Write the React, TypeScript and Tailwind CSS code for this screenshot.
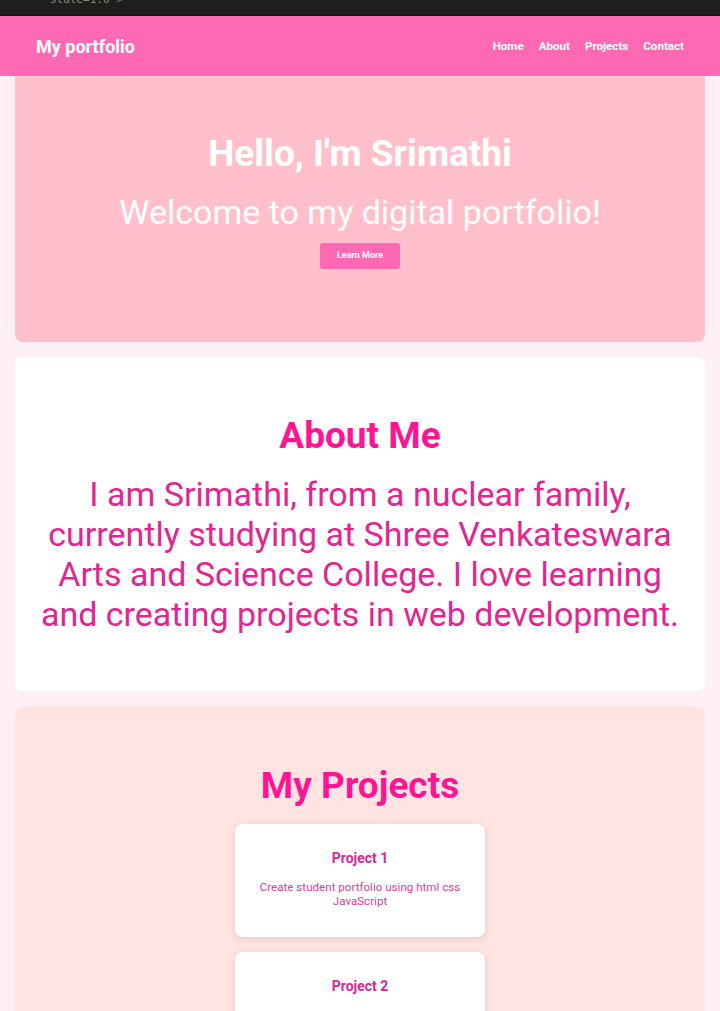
import React from 'react';

const navLinks = ['Home', 'About', 'Projects', 'Contact'];

const projects = [
  { title: 'Project 1', text: 'Create student portfolio using html css JavaScript' },
  { title: 'Project 2', text: 'Responsive landing page' },
];

function ProjectCard({ title, text }: { title: string; text: string }) {
  return (
    <div className="w-[250px] rounded-lg bg-white px-5 pt-[26px] pb-[29px] text-center shadow-[0_2px_8px_rgba(0,0,0,0.12)]">
      <h3 className="text-[14px] font-bold leading-[1.2] text-[#d8288c]">{title}</h3>
      <p className="mt-[13px] text-[11.6px] leading-[14px] text-[#e0409a]">{text}</p>
    </div>
  );
}

export default function App() {
  return (
    <div className="min-h-screen overflow-hidden bg-[#fff0f5] font-['Roboto',sans-serif]">
      <div className="relative h-4 overflow-hidden border-b border-[#141414] bg-[#1e1e1e]">
        <span className="absolute top-[-8px] left-[50px] font-['DejaVu_Sans_Mono',monospace] text-[11px] text-[#8a8a7a]">
          state=1.0 &gt;
        </span>
      </div>

      <header className="flex h-[60px] items-center justify-between bg-[#ff69b4] px-9 text-white">
        <h1 className="text-[18px] font-bold">My portfolio</h1>
        <nav className="mt-px flex gap-[15px] text-[11.6px] font-bold">
          {navLinks.map((l) => (
            <a key={l} href="#">
              {l}
            </a>
          ))}
        </nav>
      </header>

      <section className="mx-[15px] rounded-b-lg bg-[#ffc0cb] pt-[56px] pb-[73px] text-center text-white">
        <h1 className="text-[37px] font-bold leading-[1.2]">Hello, I'm Srimathi</h1>
        <p className="mt-4 text-[34px] leading-[1.2]">Welcome to my digital portfolio!</p>
        <button className="mt-[10px] h-[26px] w-20 rounded-[3px] bg-[#ff69b4] text-[9px] font-bold text-white">
          Learn More
        </button>
      </section>

      <section className="mx-[15px] mt-[15px] rounded-lg bg-white px-5 pt-[57px] pb-[57px] text-center">
        <h2 className="text-[37px] font-bold leading-[1.2] text-[#ff1493]">About Me</h2>
        <p className="mt-[15px] text-[34px] leading-[40px] text-[#e3268f]">
          I am Srimathi, from a nuclear family, currently studying at Shree Venkateswara Arts and
          Science College. I love learning and creating projects in web development.
        </p>
      </section>

      <section className="mx-[15px] mt-[15px] flex flex-col items-center rounded-lg bg-[#ffe4e1] pt-[58px] pb-10">
        <h2 className="text-[37px] font-bold leading-[1.2] text-[#ff1493]">My Projects</h2>
        <div className="mt-4 flex flex-col gap-[15px]">
          {projects.map((p) => (
            <ProjectCard key={p.title} {...p} />
          ))}
        </div>
      </section>
    </div>
  );
}
